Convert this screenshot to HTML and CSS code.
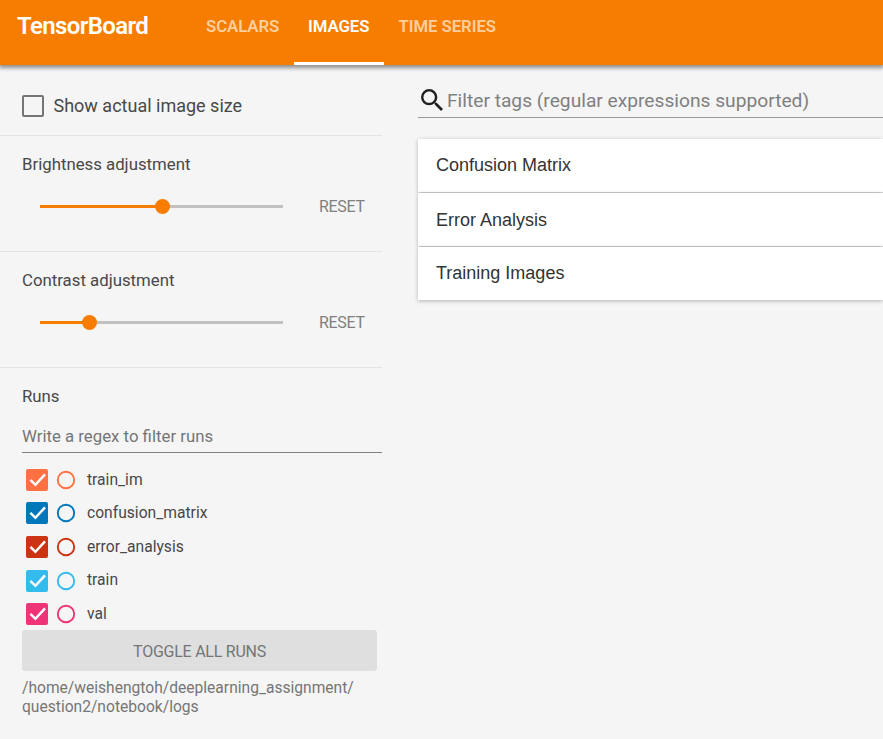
FILE: index.html
```html
<!DOCTYPE html>
<html lang="en">
<head>
<meta charset="utf-8">
<title>TensorBoard</title>
<link rel="stylesheet" href="styles.css">
</head>
<body>
<svg class="defs" width="0" height="0">
  <symbol id="check" viewBox="0 0 22 22"><path d="M4.4 10.9L9.4 15.8L19 5.4" fill="none" stroke="#fff" stroke-width="2.5"/></symbol>
</svg>
<header class="toolbar">
  <h1 class="brand"><span>TensorBoard</span></h1>
  <nav class="tabs">
    <a class="tab scalars"><span>SCALARS</span></a>
    <a class="tab images active"><span>IMAGES</span></a>
    <a class="tab series"><span>TIME SERIES</span></a>
  </nav>
</header>
<div class="content">
  <aside class="sidebar">
    <section class="section size-section">
      <i class="box"></i><span class="size-label">Show actual image size</span>
    </section>
    <section class="section adjust">
      <h3 class="heading brightness">Brightness adjustment</h3>
      <div class="control">
        <div class="slider"><div class="fill" style="width:50%"></div><i class="knob"></i></div>
        <span class="reset">RESET</span>
      </div>
    </section>
    <section class="section adjust">
      <h3 class="heading contrast">Contrast adjustment</h3>
      <div class="control">
        <div class="slider"><div class="fill" style="width:20%"></div><i class="knob"></i></div>
        <span class="reset">RESET</span>
      </div>
    </section>
    <section class="runs">
      <h3 class="heading">Runs</h3>
      <div class="regex"><span>Write a regex to filter runs</span></div>
      <ul class="run-list">
        <li class="run coral"><svg class="check"><use href="#check"/></svg><svg class="ring" viewBox="0 0 20 20"><circle cx="10" cy="10" r="8.2"/></svg><span>train_im</span></li>
        <li class="run blue"><svg class="check"><use href="#check"/></svg><svg class="ring" viewBox="0 0 20 20"><circle cx="10" cy="10" r="8.2"/></svg><span>confusion_matrix</span></li>
        <li class="run red"><svg class="check"><use href="#check"/></svg><svg class="ring" viewBox="0 0 20 20"><circle cx="10" cy="10" r="8.2"/></svg><span>error_analysis</span></li>
        <li class="run cyan"><svg class="check"><use href="#check"/></svg><svg class="ring" viewBox="0 0 20 20"><circle cx="10" cy="10" r="8.2"/></svg><span>train</span></li>
        <li class="run pink"><svg class="check"><use href="#check"/></svg><svg class="ring" viewBox="0 0 20 20"><circle cx="10" cy="10" r="8.2"/></svg><span>val</span></li>
      </ul>
      <div class="toggle"><span>TOGGLE ALL RUNS</span></div>
      <p class="logdir"><span>/home/weishengtoh/deeplearning_assignment/</span><br><span>question2/notebook/logs</span></p>
    </section>
  </aside>
  <main class="center">
    <div class="filter">
      <svg class="search" viewBox="3 3 17.5 17.5"><path fill="#212121" d="M15.5 14h-.79l-.28-.27A6.471 6.471 0 0 0 16 9.5 6.5 6.5 0 1 0 9.5 16c1.61 0 3.09-.59 4.23-1.57l.27.28v.79l5 4.99L20.49 19l-4.99-5zm-6 0C7.01 14 5 11.99 5 9.5S7.01 5 9.5 5 14 7.01 14 9.5 11.99 14 9.5 14z"/></svg>
      <span class="placeholder">Filter tags (regular expressions supported)</span>
    </div>
    <div class="cards">
      <div class="card"><span>Confusion Matrix</span></div>
      <div class="card middle"><span>Error Analysis</span></div>
      <div class="card"><span>Training Images</span></div>
    </div>
  </main>
</div>
</body>
</html>
```
FILE: styles.css
```css
* { box-sizing: border-box; }
body {
  margin: 0;
  height: 739px;
  overflow: hidden;
  background: #f5f5f5;
  font-family: Roboto, "Liberation Sans", sans-serif;
  color: #484848;
}
h1, h3, p, ul { margin: 0; padding: 0; font-weight: 400; }
span { white-space: nowrap; }
.defs { display: block; height: 0; }
.toolbar {
  position: relative;
  display: flex;
  height: 65px;
  background: #f77d00;
  color: #fff;
  box-shadow: 0 2px 4px 1px rgba(0, 0, 0, .42);
}
.brand {
  width: 174px;
  padding-left: 17px;
  margin-right: 17px;
  font-size: 24px;
  line-height: 52px;
  font-weight: 600;
  letter-spacing: -.65px;
}
.tabs { display: flex; }
.tab {
  height: 65px;
  padding: 0 15px;
  font-size: 16.8px;
  line-height: 53px;
  font-weight: 600;
  letter-spacing: -.08px;
  color: #fdcf9e;
}
.scalars { width: 103px; }
.images { width: 90px; padding-left: 14px; }
.active { color: #fff; border-bottom: 3px solid #fff; }
.series { padding-left: 14.5px; }
.content { display: flex; }
.sidebar { width: 382px; }
.section { border-bottom: 1px solid #e4e4e4; }
.size-section {
  display: flex;
  align-items: center;
  height: 71px;
  padding: 12px 0 0 22px;
}
.box { width: 22px; height: 22px; border: 2px solid #757575; border-radius: 2px; }
.size-label { margin-left: 9.5px; font-size: 18px; line-height: 20px; }
.adjust { height: 116px; padding: 18px 0 0 22px; }
.heading { font-size: 16.8px; line-height: 20px; }
.control { display: flex; align-items: center; height: 22px; margin-top: 21px; padding-left: 18px; }
.slider { display: flex; align-items: center; width: 243px; height: 3px; background: #c1c1c1; }
.fill { flex: none; height: 3px; background: #f77d00; }
.knob { flex: none; width: 15px; height: 15px; margin-left: -7px; border-radius: 50%; background: #f77d00; }
.reset { margin-left: 36px; padding-top: 1px; font-size: 16px; letter-spacing: -.3px; color: #808080; }
.runs { padding: 18px 0 0 22px; }
.regex { height: 36px; margin-top: 11px; border-bottom: 1px solid #808080; font-size: 16.8px; line-height: 39px; color: #757575; }
.regex + .run-list { padding: 10px 0 0 4.4px; list-style: none; }
.run { display: flex; align-items: center; height: 33.6px; font-size: 15.65px; }
.check { width: 22px; height: 22px; border-radius: 2px; background: currentColor; }
.ring { width: 20px; height: 20px; margin: 0 10.6px 0 8px; fill: none; stroke: currentColor; stroke-width: 1.9; }
.run span { color: #484848; padding-bottom: 1.4px; }
.coral { color: #ff7043; }
.blue { color: #0077bb; }
.red { color: #cc3311; }
.cyan { color: #33bbee; }
.pink { color: #ee3377; }
.toggle { width: 355px; height: 41px; margin-top: -.6px; border-radius: 3px; background: #dfdfdf; color: #757575; font-size: 16px; letter-spacing: -.25px; line-height: 43.5px; text-align: center; }
.logdir { margin-top: 7.5px; font-size: 15.6px; line-height: 19px; color: #757575; }
.center { flex: 1; min-width: 0; padding: 17px 0 0 36px; }
.filter { display: flex; align-items: center; height: 36px; padding-left: 3px; border-bottom: 1px solid #9a9a9a; font-size: 19.2px; color: #808080; }
.placeholder { padding-top: 1px; }
.search { width: 22px; height: 22px; margin-right: 4px; }
.cards { display: grid; gap: 1.5px; margin-top: 21px; }
.card {
  height: 52.5px;
  padding-left: 18px;
  background: #fff;
  box-shadow: 0 1px 4px rgba(0, 0, 0, .28);
  font-family: "Liberation Sans", sans-serif;
  font-size: 18px;
  line-height: 52px;
  color: #333;
}
.middle { line-height: 54px; }
```
